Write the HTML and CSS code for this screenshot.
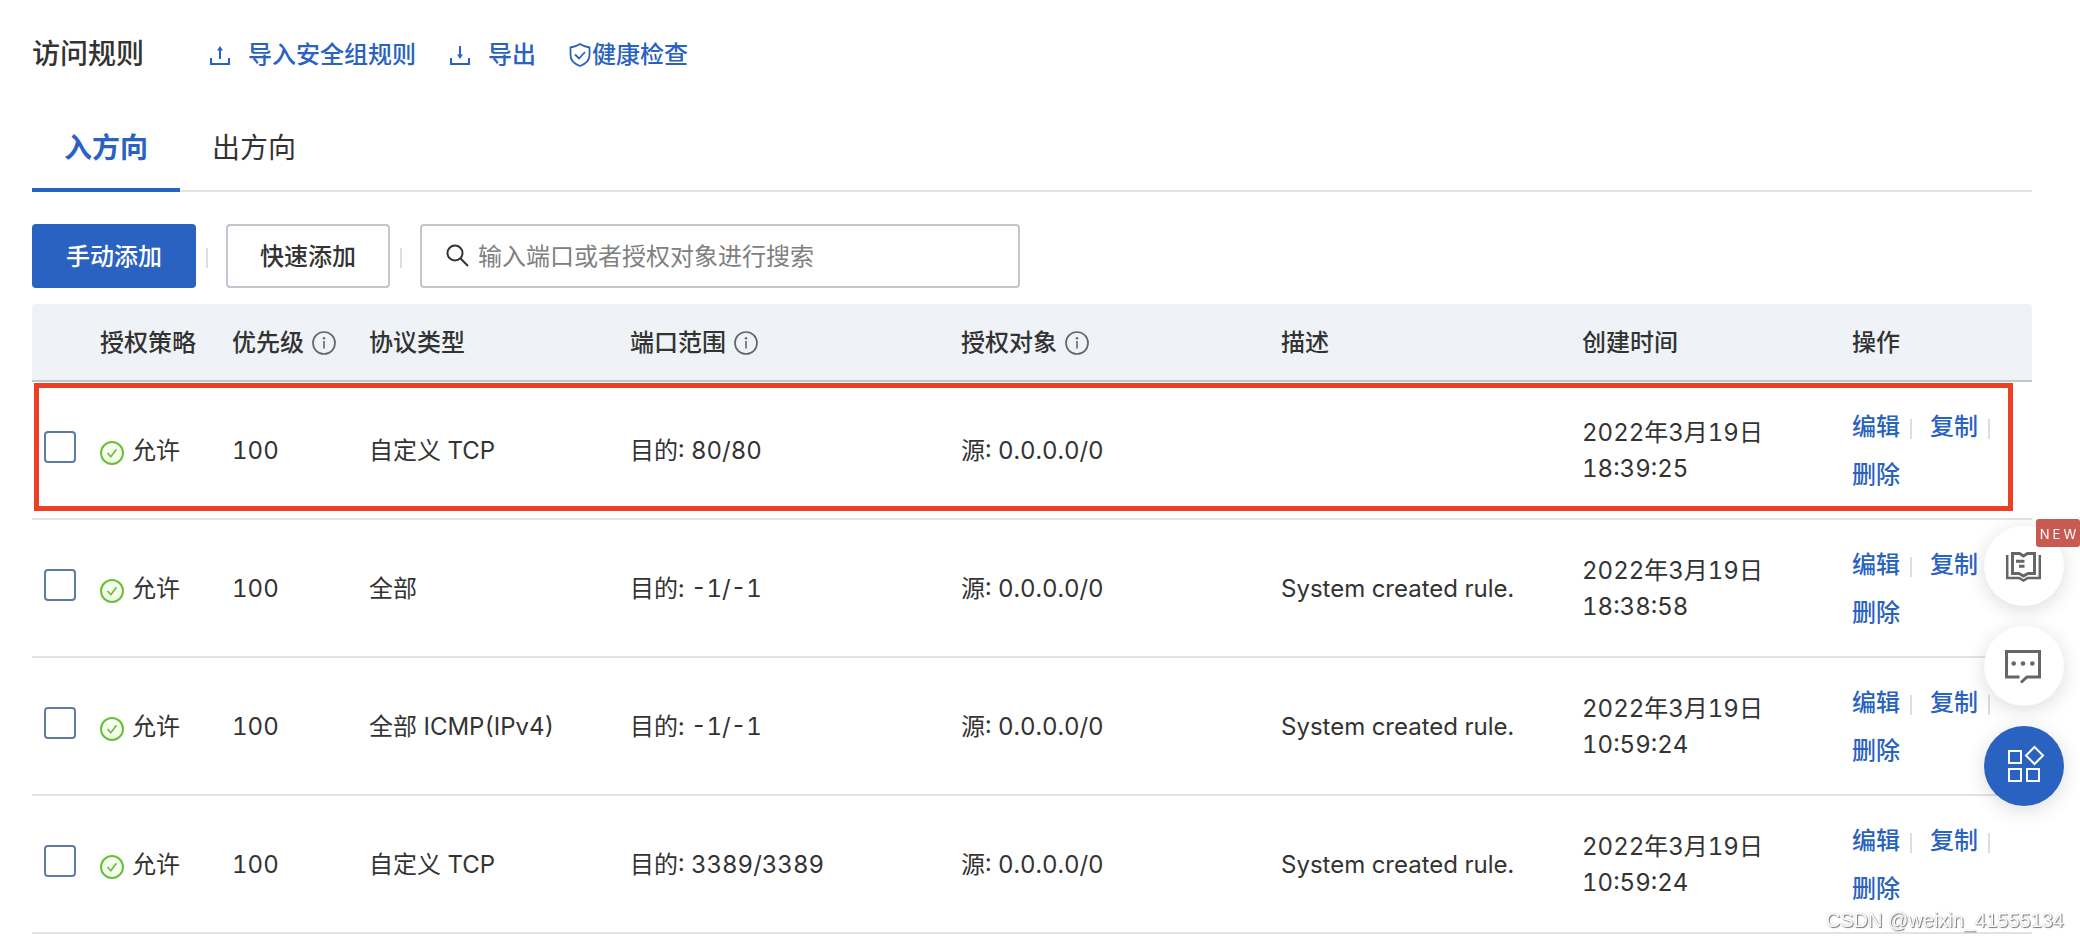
FILE: index.html
```html
<!DOCTYPE html>
<html lang="zh-CN">
<head>
<meta charset="utf-8">
<meta name="viewport" content="width=device-width, initial-scale=1">
<title>访问规则</title>
<link rel="stylesheet" href="styles.css">
</head>
<body>
<svg class="sprite" aria-hidden="true">
  <symbol id="i-info" viewBox="0 0 24 24"><circle cx="12" cy="12" r="11" fill="none" stroke="#666" stroke-width="1.7"/><circle cx="12" cy="7.200" r="1.200" fill="#666"/><path d="M12 10V17.500" stroke="#666" stroke-width="1.600"/></symbol>
  <symbol id="i-ok" viewBox="0 0 24 24"><circle cx="12" cy="12" r="11" fill="#f6ffed" stroke="#68bf3a" stroke-width="2"/><path d="M7.500 12l3.300 3.700 5.700-7.500" fill="none" stroke="#68bf3a" stroke-width="1.700"/></symbol>
</svg>
<main class="page">
  <header class="head">
    <h1 class="title">访问规则</h1>
    <nav class="links">
      <a href="#" class="link link-spaced"><svg class="ico" viewBox="0 0 24 24" fill="none" stroke="currentColor" stroke-width="2"><path d="M3 15v6h18v-6"/><path d="M12 16V5"/><path d="M9 7.500l3-4.500 3 4.500z" fill="currentColor" stroke="none"/></svg>导入安全组规则</a>
      <a href="#" class="link link-spaced"><svg class="ico" viewBox="0 0 24 24" fill="none" stroke="currentColor" stroke-width="2"><path d="M3 15v6h18v-6"/><path d="M12 3v11"/><path d="M9 11.500l3 4.500 3-4.500z" fill="currentColor" stroke="none"/></svg>导出</a>
      <a href="#" class="link"><svg class="ico" viewBox="0 0 24 24" fill="none" stroke="currentColor" stroke-width="1.800"><path d="M12 1c3 2 6 3 9.500 3.500V12c0 5-4 9-9.500 11C6.500 21 2.500 17 2.500 12V4.500C6 4 9 3 12 1z"/><path d="M7 11.500l4 4 6-6.500"/></svg>健康检查</a>
    </nav>
  </header>
  <div class="tabs" role="tablist">
    <button class="tab tab-on" role="tab" aria-selected="true">入方向</button>
    <button class="tab" role="tab" aria-selected="false">出方向</button>
  </div>
  <div class="tools">
    <button class="btn btn-primary">手动添加</button>
    <span class="bar"></span>
    <button class="btn">快速添加</button>
    <span class="bar"></span>
    <label class="search"><svg class="ico-search" viewBox="0 0 24 24" fill="none" stroke="#333" stroke-width="2"><circle cx="9" cy="9" r="7.500"/><path d="M14.500 14.500l7.500 7.500"/></svg><input type="search" aria-label="搜索" placeholder="输入端口或者授权对象进行搜索"></label>
  </div>
  <table class="rules">
    <colgroup><col class="c-check"><col class="c-policy"><col class="c-prio"><col class="c-proto"><col class="c-port"><col class="c-target"><col class="c-desc"><col class="c-time"><col class="c-ops"></colgroup>
    <thead>
      <tr><th></th><th>授权策略</th><th><span class="th-in">优先级<svg class="ico"><use href="#i-info"/></svg></span></th><th>协议类型</th><th><span class="th-in">端口范围<svg class="ico"><use href="#i-info"/></svg></span></th><th><span class="th-in">授权对象<svg class="ico"><use href="#i-info"/></svg></span></th><th>描述</th><th>创建时间</th><th>操作</th></tr>
    </thead>
    <tbody>
      <tr class="marked"><td><input type="checkbox" class="check" aria-label="选择规则 1"></td><td><span class="status"><svg class="ico"><use href="#i-ok"/></svg>允许</span></td><td>100</td><td>自定义 TCP</td><td>目的: 80/80</td><td>源: 0.0.0.0/0</td><td></td><td>2022年3月19日<br>18:39:25</td><td><div class="ops"><a href="#">编辑</a><span class="bar"></span><a href="#">复制</a><span class="bar"></span><a href="#">删除</a></div></td></tr>
      <tr><td><input type="checkbox" class="check" aria-label="选择规则 2"></td><td><span class="status"><svg class="ico"><use href="#i-ok"/></svg>允许</span></td><td>100</td><td>全部</td><td>目的: -1/-1</td><td>源: 0.0.0.0/0</td><td>System created rule.</td><td>2022年3月19日<br>18:38:58</td><td><div class="ops"><a href="#">编辑</a><span class="bar"></span><a href="#">复制</a><span class="bar"></span><a href="#">删除</a></div></td></tr>
      <tr><td><input type="checkbox" class="check" aria-label="选择规则 3"></td><td><span class="status"><svg class="ico"><use href="#i-ok"/></svg>允许</span></td><td>100</td><td>全部 ICMP(IPv4)</td><td>目的: -1/-1</td><td>源: 0.0.0.0/0</td><td>System created rule.</td><td>2022年3月19日<br>10:59:24</td><td><div class="ops"><a href="#">编辑</a><span class="bar"></span><a href="#">复制</a><span class="bar"></span><a href="#">删除</a></div></td></tr>
      <tr><td><input type="checkbox" class="check" aria-label="选择规则 4"></td><td><span class="status"><svg class="ico"><use href="#i-ok"/></svg>允许</span></td><td>100</td><td>自定义 TCP</td><td>目的: 3389/3389</td><td>源: 0.0.0.0/0</td><td>System created rule.</td><td>2022年3月19日<br>10:59:24</td><td><div class="ops"><a href="#">编辑</a><span class="bar"></span><a href="#">复制</a><span class="bar"></span><a href="#">删除</a></div></td></tr>
    </tbody>
  </table>
</main>
<aside class="float">
  <button class="fab" aria-label="文档"><svg class="fab-ico" viewBox="0 0 36 36" fill="none" stroke="#666" stroke-width="3"><path d="M6.500 5.500h7L17.500 8l4-2.500h7v20h-6.500L17.500 28 13 25.500H6.500z"/><path d="M1.200 7v23h12l4.300 2.500 4.300-2.500h12V7" stroke-width="2.500"/><path d="M10 13.200h8.500M13 18.200h5.500"/></svg><span class="new">NEW</span></button>
  <button class="fab" aria-label="反馈"><svg class="fab-ico" viewBox="0 0 36 36" fill="none" stroke="#666" stroke-width="3"><path d="M13.500 29H.5V3.500h33V29h-12.500L15 34.500"/><g fill="#666" stroke="none"><circle cx="7.700" cy="15.500" r="2.300"/><circle cx="17" cy="15.500" r="2.300"/><circle cx="26.300" cy="15.500" r="2.300"/></g></svg></button>
  <button class="fab fab-blue" aria-label="工具"><svg class="fab-ico" viewBox="0 0 36 36" fill="none" stroke="#fff" stroke-width="2"><path d="M3 3h12v12H3zM3 21h12v12H3zM21 21h12v12H21zM28.500-1l8.500 8.500-8.500 8.500L20 7.500z"/></svg></button>
</aside>
<div class="credit">CSDN @weixin_41555134</div>
</body>
</html>
```
FILE: styles.css
```css
* { box-sizing: border-box; }
body {
  margin: 0;
  background: #fff;
  color: #333;
  font: 24px/36px Inter, "Noto Sans CJK SC", sans-serif;
  font-variant-numeric: tabular-nums;
  overflow: hidden;
}
button, input { font: inherit; color: inherit; }
a { color: #2962c1; text-decoration: none; font-weight: 500; }
.sprite { position: absolute; width: 0; height: 0; }
.page { padding: 32px 48px 0 32px; }
.ico { width: 24px; height: 24px; flex: none; overflow: visible; }

.head { display: flex; align-items: center; gap: 64px; height: 44px; }
.title { margin: 0; font-size: 28px; line-height: 44px; font-weight: 500; }
.links { display: flex; align-items: center; gap: 32px; padding-top: 2px; }
.link { display: flex; align-items: center; }
.link-spaced { gap: 16px; }

.tabs { display: flex; margin-top: 32px; height: 84px; border-bottom: 2px solid #e3e3e3; }
.tab {
  height: 84px;
  padding: 0 32px;
  border: 0;
  border-bottom: 4px solid transparent;
  background: none;
  font-size: 28px;
}
.tab-on { border-color: #2962c1; color: #2962c1; font-weight: 600; }

.tools { display: flex; align-items: center; margin: 32px 0 16px; }
.bar { width: 2px; height: 20px; background: #dedede; }
.tools .bar { margin: 4px 18px 0 10px; }
.btn {
  height: 64px;
  padding: 2px 32px 0;
  border: 2px solid #c1c7cc;
  border-radius: 4px;
  background: #fff;
  font-weight: 500;
}
.btn-primary { border-color: #2962c1; background: #2962c1; color: #fff; }
.search {
  display: flex;
  align-items: center;
  gap: 8px;
  flex: 0 1 600px;
  height: 64px;
  padding: 0 24px;
  border: 2px solid #c1c7cc;
  border-radius: 4px;
}
.ico-search { width: 24px; height: 24px; flex: none; }
.search input { flex: 1; min-width: 0; padding: 2px 0 0; border: 0; outline: 0; background: none; }
.search input::placeholder { color: #808080; }

.rules { width: 100%; table-layout: fixed; border-collapse: separate; border-spacing: 0; }
.c-check { width: 3%; }
.c-policy { width: 6.6%; }
.c-prio { width: 6.85%; }
.c-proto { width: 13.05%; }
.c-port { width: 16.55%; }
.c-target { width: 16%; }
.c-desc { width: 15.05%; }
.c-time { width: 13.5%; }
.c-ops { width: 9.4%; }
.rules th, .rules td { padding: 2px 8px 0; text-align: left; vertical-align: middle; }
.rules th { height: 78px; background: #eff3f7; border-bottom: 2px solid #c1c7cc; font-weight: 500; }
.rules th:first-child { border-top-left-radius: 4px; }
.rules th:last-child { border-top-right-radius: 4px; }
.rules td { height: 138px; border-bottom: 2px solid #e3e3e3; }
.th-in, .status { display: flex; align-items: center; gap: 8px; white-space: nowrap; }
.status .ico { margin-top: 4px; }
.check {
  appearance: none;
  display: block;
  width: 32px;
  height: 32px;
  margin: 0 0 8px 4px;
  border: 2px solid #5e7ba2;
  border-radius: 4px;
  background: #fff;
}
.ops { display: flex; flex-wrap: wrap; align-items: center; line-height: 48px; width: 150px; }
.ops .bar { margin: 4px 18px 0 10px; }
.ops .bar + a + .bar { margin-right: 0; }
.marked { position: relative; }
.marked::after {
  content: "";
  position: absolute;
  inset: 1px 19px 9px 2px;
  border: 5px solid #ec4025;
  pointer-events: none;
}

.float { position: fixed; right: 16px; top: 526px; display: grid; gap: 20px; }
.fab {
  position: relative;
  display: grid;
  place-items: center;
  width: 80px;
  height: 80px;
  padding: 0;
  border: 0;
  border-radius: 50%;
  background: #fff;
  box-shadow: 0 4px 20px rgba(0, 0, 0, .14);
}
.fab-blue { background: #2962c1; }
.fab-ico { width: 36px; height: 36px; overflow: visible; }
.new {
  position: absolute;
  top: -7px;
  right: -16px;
  width: 44px;
  padding-left: 3px;
  border-radius: 3px;
  background: #c95a52;
  color: #fff;
  font-size: 13px;
  line-height: 30px;
  height: 28px;
  letter-spacing: 3px;
}
.credit {
  position: fixed;
  right: 16px;
  bottom: 6px;
  color: #fff;
  font: 20px/28px "Liberation Sans", sans-serif;
  text-shadow: 1px 1px 1px #777, 0 0 1px #999;
}
```
